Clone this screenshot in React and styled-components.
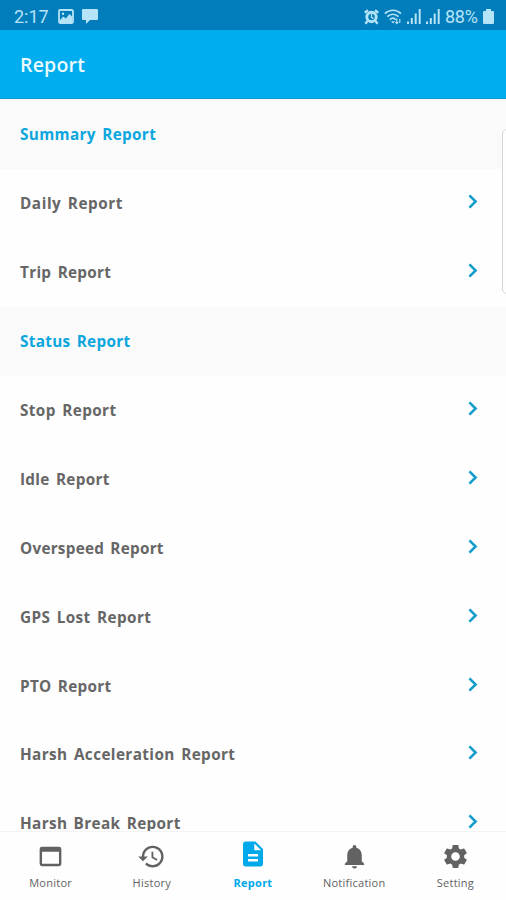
import styled, { createGlobalStyle } from "styled-components";
import {
  MdWebAsset,
  MdHistory,
  MdDescription,
  MdNotifications,
  MdSettings,
} from "react-icons/md";

const GlobalStyle = createGlobalStyle`
  * {
    box-sizing: border-box;
  }

  body {
    margin: 0;
    overflow: hidden;
    background: #fefefe;
    font-family: "Open Sans", "Noto Sans", sans-serif;
  }
`;

const Screen = styled.div`
  position: relative;
  display: flex;
  flex-direction: column;
  width: 100%;
  height: 100vh;
  overflow: hidden;
`;

const StatusBar = styled.div`
  display: flex;
  align-items: center;
  flex: none;
  height: 30px;
  padding: 3px 12px 0 14px;
  background: #027dbb;
  color: #b5e3f7;
  font-family: Roboto, sans-serif;

  svg {
    flex: none;
  }
`;

const Clock = styled.span`
  width: 44px;
  font-size: 18px;
  line-height: 26px;
`;

const StatusGroup = styled.div`
  display: flex;
  align-items: center;
  gap: ${({ $gap }) => $gap}px;
  margin-left: ${({ $end }) => ($end ? "auto" : 0)};
`;

const Battery = styled.span`
  width: 33px;
  font-size: 18px;
  line-height: 26px;
  letter-spacing: -0.3px;
  white-space: nowrap;
`;

const TitleBar = styled.header`
  display: flex;
  align-items: center;
  flex: none;
  height: 69px;
  padding: 1px 20px 0;
  background: #00adef;
  border-bottom: 1px solid #0896cf;
  color: #e9fbff;
`;

const Title = styled.h1`
  margin: 0;
  font-size: 19.5px;
  font-weight: 600;
  line-height: 28px;
  letter-spacing: 0.2px;
`;

const List = styled.main`
  flex: 1;
  min-height: 0;
  padding-top: 1px;
  overflow: hidden;
  background: linear-gradient(#fafafa 1px, #fefefe 1px);
`;

const Row = styled.div`
  display: flex;
  align-items: center;
  justify-content: space-between;
  height: 68.9px;
  padding: 0 28px 0 20px;
  background: #fefefe;
  color: #666;

  svg {
    margin-bottom: 3px;
    color: #139dca;
  }
`;

const SectionRow = styled(Row)`
  background: #fafafa;
  color: #0ba6de;
`;

const Label = styled.span`
  font-size: 15.3px;
  font-weight: 700;
  line-height: 22px;
  letter-spacing: ${({ $tracking }) => $tracking || 0.3}px;
  word-spacing: 2px;
`;

const TabBar = styled.nav`
  display: flex;
  flex: none;
  height: 69px;
  border-top: 1px solid #f3f3f3;
  background: #fefefe;
`;

const Tab = styled.div`
  display: flex;
  flex: 1;
  flex-direction: column;
  align-items: center;
  padding-top: ${({ $active }) => ($active ? 7 : 10)}px;
  color: ${({ $active }) => ($active ? "#00a9ea" : "#626262")};
`;

const TabLabel = styled.span`
  margin-top: ${({ $active }) => ($active ? 6 : 4)}px;
  font-size: 11px;
  font-weight: ${({ $active }) => ($active ? 700 : 400)};
  line-height: 16px;
  letter-spacing: 0.25px;
`;

const EdgeHandle = styled.div`
  position: absolute;
  top: 129px;
  right: -8px;
  width: 12px;
  height: 165px;
  border: 1px solid #d6d6d6;
  border-radius: 5px;
  background: #fefefe;
`;

const ChevronIcon = () => (
  <svg width="10" height="15" viewBox="0 0 10 15" fill="none">
    <path d="m1.4 1.4 6.2 6.1-6.2 6.1" stroke="currentColor" strokeWidth="2.6" />
  </svg>
);

const PictureIcon = () => (
  <svg width="16" height="15" viewBox="0 0 16 15" fill="none">
    <rect x="1" y="1" width="14" height="13" rx="1.2" stroke="currentColor" strokeWidth="1.8" />
    <circle cx="5" cy="4.8" r="1.2" fill="currentColor" />
    <path d="M2 11 5.4 7.6l2.4 2L11.5 5 14 7.6V13H2z" fill="currentColor" />
  </svg>
);

const ChatIcon = () => (
  <svg width="16" height="15" viewBox="0 0 16 15">
    <path d="M1 0h14a1 1 0 0 1 1 1v9a1 1 0 0 1-1 1H8l-4 4v-4H1a1 1 0 0 1-1-1V1a1 1 0 0 1 1-1z" fill="currentColor" />
  </svg>
);

const AlarmIcon = () => (
  <svg width="15" height="16" viewBox="0 0 15 16" fill="none" stroke="currentColor">
    <path d="M.8 3.8 4 1.2M14.2 3.8 11 1.2M3.6 12 1.4 14.8M11.4 12l2.2 2.8" strokeWidth="2.4" />
    <circle cx="7.5" cy="8" r="4.7" strokeWidth="2.9" />
    <path d="M7.5 5v3.4l2 1.2" strokeWidth="1.3" />
  </svg>
);

const WifiIcon = () => (
  <svg width="18" height="16" viewBox="0 0 18 16" fill="none" stroke="currentColor" strokeWidth="1.7">
    <path d="M.8 4.6C5.5.1 12.3.1 17 4.6M3.3 7.7c3.4-3.1 7.8-3.1 11.2 0M5.8 10.6c1.9-1.7 4.2-1.7 6 0" />
    <path d="m9 14.5-2-2.2h4z" fill="currentColor" stroke="none" />
    <path d="M12.8 9.5v5M11.3 13l1.5 1.7 1.5-1.7M15.8 14v-4" strokeWidth="1.1" />
  </svg>
);

const SignalIcon = () => (
  <svg width="14" height="15" viewBox="0 0 14 15" fill="currentColor">
    <path d="M0 12.5h2V15H0zM3.8 9h2v6h-2zM7.7 4.5h2V15h-2zM11.7 0h2v15h-2z" />
  </svg>
);

const BatteryIcon = () => (
  <svg width="11" height="15" viewBox="0 0 11 15" fill="currentColor">
    <path d="M3 0h5v2h2a1 1 0 0 1 1 1v11a1 1 0 0 1-1 1H1a1 1 0 0 1-1-1V3a1 1 0 0 1 1-1h2z" />
  </svg>
);

const sections = [
  {
    title: "Summary Report",
    tracking: 0.35,
    reports: [{ name: "Daily Report", tracking: 0.55 }, { name: "Trip Report" }],
  },
  {
    title: "Status Report",
    reports: [
      { name: "Stop Report", tracking: 0.4 },
      { name: "Idle Report" },
      { name: "Overspeed Report", tracking: 0.25 },
      { name: "GPS Lost Report", tracking: 0.4 },
      { name: "PTO Report" },
      { name: "Harsh Acceleration Report", tracking: 0.4 },
      { name: "Harsh Break Report", tracking: 0.35 },
    ],
  },
];

const tabs = [
  { name: "Monitor", Icon: MdWebAsset },
  { name: "History", Icon: MdHistory },
  { name: "Report", Icon: MdDescription, active: true },
  { name: "Notification", Icon: MdNotifications },
  { name: "Setting", Icon: MdSettings },
];

export default function App() {
  return (
    <>
      <GlobalStyle />
      <Screen>
        <StatusBar>
          <Clock>2:17</Clock>
          <StatusGroup $gap={8}>
            <PictureIcon />
            <ChatIcon />
          </StatusGroup>
          <StatusGroup $gap={5} $end>
            <AlarmIcon />
            <WifiIcon />
            <SignalIcon />
            <SignalIcon />
            <Battery>88%</Battery>
            <BatteryIcon />
          </StatusGroup>
        </StatusBar>
        <TitleBar>
          <Title>Report</Title>
        </TitleBar>
        <List>
          {sections.map(({ title, tracking, reports }) => (
            <section key={title}>
              <SectionRow>
                <Label $tracking={tracking}>{title}</Label>
              </SectionRow>
              {reports.map((report) => (
                <Row key={report.name}>
                  <Label $tracking={report.tracking}>{report.name}</Label>
                  <ChevronIcon />
                </Row>
              ))}
            </section>
          ))}
        </List>
        <TabBar>
          {tabs.map(({ name, Icon, active }) => (
            <Tab key={name} $active={active}>
              <Icon size={active ? 30 : 29} />
              <TabLabel $active={active}>{name}</TabLabel>
            </Tab>
          ))}
        </TabBar>
        <EdgeHandle />
      </Screen>
    </>
  );
}
